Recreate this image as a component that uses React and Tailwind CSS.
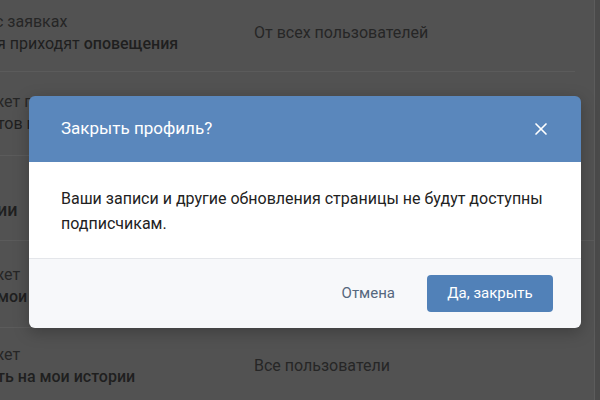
import { X } from "lucide-react";

const font = { fontFamily: "Roboto, 'Liberation Sans', sans-serif" };

function Row({ height, line1, line2, value, shift = "-ml-[5px]" }) {
  return (
    <div
      className={`flex items-center border-b border-[#5b5b5b] ${height}`}
    >
      <div className="w-[257px] -ml-[3px] text-[16px] leading-[22px]">
        <div className={`text-[#262626] ${shift}`}>{line1}</div>
        <div className="text-[#1f1f1f]">{line2}</div>
      </div>
      <div className="text-[16px] text-[#262626]">{value}</div>
    </div>
  );
}

export default function App() {
  return (
    <div
      className="relative w-[600px] h-[400px] overflow-hidden bg-[#4a4a4a]"
      style={font}
    >
      {/* page behind the dimmed overlay */}
      <div className="w-[595px] h-full bg-[#525252] border-r border-[#5c5c5c]">
        <div className="w-[575px]">
          <Row
            height="h-[72px] pb-[5px]"
            shift="-ml-[2px]"
            line1="с заявках"
            line2={
              <>
                я приходят <span className="font-medium">оповещения</span>
              </>
            }
            value="От всех пользователей"
          />
          <Row
            height="h-[84px] pb-[2px]"
            line1="жет получать"
            line2="тов профиля"
            value=""
          />
        </div>
        <div className="h-[85px] border-b border-[#5b5b5b] pt-[40px] -ml-[3px] text-[18px] font-medium text-[#1f1f1f]">
          ии
        </div>
        <div className="w-[575px]">
          <Row
            height="h-[87px] pt-[3px]"
            line1="жет"
            line2={<span className="font-medium">мои</span>}
            value=""
          />
          <Row
            height="h-[80px] pb-[4px]"
            line1="жет"
            line2={<span className="font-medium">ть на мои истории</span>}
            value="Все пользователи"
          />
        </div>
      </div>

      {/* modal */}
      <div className="absolute left-[29px] top-[96px] w-[552px] rounded-[6px] overflow-hidden shadow-[0_4px_16px_rgba(0,0,0,0.25)]">
        <div className="h-[66px] bg-[#5a87bc] flex items-center justify-between pl-[32px] pr-[30px]">
          <div className="text-[17px] text-white">Закрыть профиль?</div>
          <X size={20} strokeWidth={2} className="text-white" />
        </div>
        <div className="bg-white h-[96px] pt-[24px] pl-[32px] pr-[30px] text-[16px] leading-[25px] text-[#222]">
          Ваши записи и другие обновления страницы не будут доступны
          подписчикам.
        </div>
        <div className="h-[70px] bg-[#f7f8fa] border-t border-[#e4e6ea] flex items-center justify-end gap-[32px] pr-[28px]">
          <button className="text-[15px] text-[#55677d]">Отмена</button>
          <button className="h-[37px] w-[126px] rounded-[4px] bg-[#5181b8] text-white text-[15px]">
            Да, закрыть
          </button>
        </div>
      </div>
    </div>
  );
}
